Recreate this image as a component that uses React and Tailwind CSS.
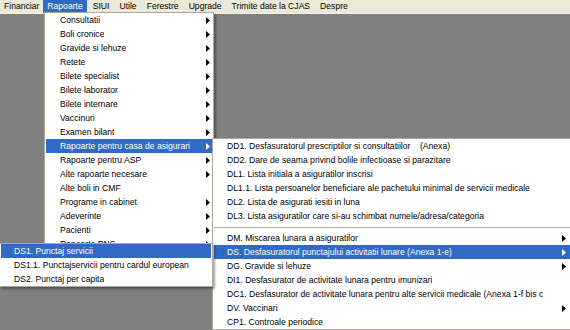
const BAR = ['Financiar', 'Rapoarte', 'SIUI', 'Utile', 'Ferestre', 'Upgrade', 'Trimite date la CJAS', 'Despre'];

const MAIN = [
    ['Consultatii', true],
    ['Boli cronice', true],
    ['Gravide si lehuze', true],
    ['Retete', true],
    ['Bilete specialist', true],
    ['Bilete laborator', true],
    ['Bilete internare', true],
    ['Vaccinuri', true],
    ['Examen bilant', true],
    ['Rapoarte pentru casa de asigurari', true],
    ['Rapoarte pentru ASP', true],
    ['Alte rapoarte necesare', true],
    ['Alte boli in CMF', false],
    ['Programe in cabinet', true],
    ['Adeverinte', true],
    ['Pacienti', true],
    ['Rapoarte PNS', true],
];

const CASA_TOP = [
    'DD1. Desfasuratorul prescriptilor si consultatiilor    (Anexa)',
    'DD2. Dare de seama privind bolile infectioase si parazitare',
    'DL1. Lista initiala a asiguratilor inscrisi',
    'DL1.1. Lista persoanelor beneficiare ale pachetului minimal de servicii medicale',
    'DL2. Lista de asigurati iesiti in luna',
    'DL3. Lista asiguratilor care si-au schimbat numele/adresa/categoria',
];

const CASA_BOTTOM = [
    ['DM. Miscarea lunara a asiguratilor', true],
    ['DS. Desfasuratorul punctajului activitatii lunare (Anexa 1-e)', true],
    ['DG. Gravide si lehuze', true],
    ['DI1. Desfasurator de activitate lunara pentru imunizari', false],
    ['DC1. Desfasurator de activitate lunara pentru alte servicii medicale (Anexa 1-f bis c', false],
    ['DV. Vaccinari', true],
    ['CP1. Controale periodice', false],
];

const DS = ['DS1. Punctaj servicii', 'DS1.1. Punctajservicii pentru cardul european', 'DS2. Punctaj per capita'];

function Arrow({ white }) {
    return (
        <svg width="4" height="7" viewBox="0 0 4 7" className="shrink-0">
            <polygon points="0,0 4,3.5 0,7" fill={white ? '#ffffff' : '#000000'} />
        </svg>
    );
}

function Row({ label, arrow, active, pl, pr }) {
    return (
        <div className={`h-[14px] flex items-center justify-between whitespace-pre ${pl} ${pr} ${active ? 'bg-[#316ac5] text-white' : 'text-black'}`}>
            <span className="leading-[15px] overflow-hidden">{label}</span>
            {arrow && <Arrow white={active} />}
        </div>
    );
}

export default function App() {
    return (
        <div
            className="relative w-[570px] h-[330px] overflow-hidden bg-[#808080] text-[8.6px]"
            style={{ fontFamily: '"Liberation Sans", Arial, sans-serif' }}
        >
            {/* Menu bar */}
            <div className="h-[14px] bg-[#ece9d8] border-b border-[#f4f2e8] flex items-stretch">
                {BAR.map((item, i) => (
                    <div
                        key={item}
                        className={`h-[13px] px-[4px] flex items-center leading-[13px] ${
                            item === 'Rapoarte' ? 'bg-[#316ac5] text-white' : 'text-black'
                        } ${i > 1 ? 'ml-[2px]' : ''}`}
                    >
                        {item}
                    </div>
                ))}
            </div>

            {/* Rapoarte */}
            <div className="absolute left-[44px] top-[12px] w-[170px] bg-white border border-[#aca899] px-[1px] shadow-[2px_2px_2px_rgba(0,0,0,0.35)] z-10">
                {MAIN.map(([label, arrow]) => (
                    <Row
                        key={label}
                        label={label}
                        arrow={arrow}
                        active={label === 'Rapoarte pentru casa de asigurari'}
                        pl="pl-[14px]"
                        pr="pr-[2px]"
                    />
                ))}
            </div>

            {/* Rapoarte pentru casa de asigurari */}
            <div className="absolute left-[212px] top-[138px] w-[360px] bg-white border border-[#aca899] px-[1px] shadow-[2px_2px_2px_rgba(0,0,0,0.35)] z-20">
                {CASA_TOP.map(label => (
                    <Row key={label} label={label} pl="pl-[13px]" pr="pr-[4px]" />
                ))}
                <div className="h-[8px] flex items-center">
                    <div className="w-full h-[1px] bg-[#aca899]" />
                </div>
                {CASA_BOTTOM.map(([label, arrow]) => (
                    <Row
                        key={label}
                        label={label}
                        arrow={arrow}
                        active={label.startsWith('DS.')}
                        pl="pl-[13px]"
                        pr="pr-[4px]"
                    />
                ))}
            </div>

            {/* DS */}
            <div className="absolute left-[-1px] top-[243px] w-[214px] bg-white border border-[#aca899] px-[1px] shadow-[2px_2px_2px_rgba(0,0,0,0.35)] z-30">
                {DS.map((label, i) => (
                    <Row key={label} label={label} active={i === 0} pl="pl-[13px]" pr="pr-[2px]" />
                ))}
            </div>
        </div>
    );
}
